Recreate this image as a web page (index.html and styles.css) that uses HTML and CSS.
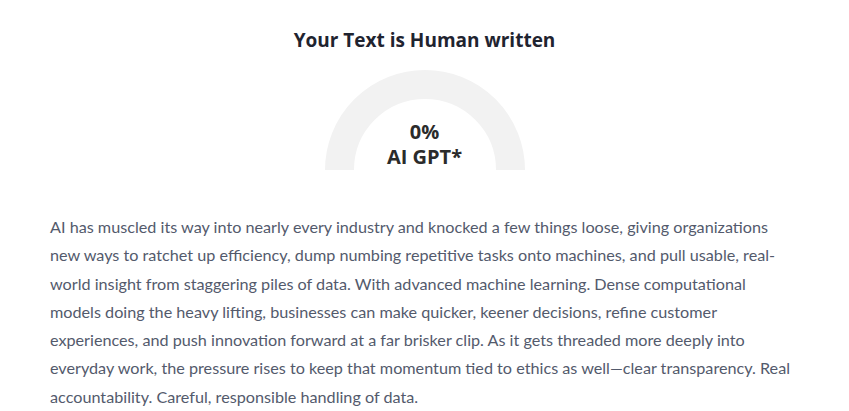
FILE: index.html
```html
<!DOCTYPE html>
<html lang="en">
<head>
  <meta charset="UTF-8" />
  <meta name="viewport" content="width=device-width, initial-scale=1.0"/>
  <title>AI Detector Result</title>
  <link rel="stylesheet" href="styles.css">
</head>
<body>

  <main class="result">
    <h2 class="result-title">Your Text is Human written</h2>

    <div class="gauge">
      <svg class="gauge-ring" width="200" height="100" viewBox="0 0 200 100">
        <path d="M 14.5 100 A 85.5 85.5 0 0 1 185.5 100" fill="none" stroke="#f2f2f2" stroke-width="29"/>
      </svg>
      <div class="gauge-label">
        <span>0%</span>
        <span>AI GPT*</span>
      </div>
    </div>

    <p class="result-text">AI has muscled its way into nearly every industry and knocked a few things loose, giving organizations new ways to ratchet up efficiency, dump numbing repetitive tasks onto machines, and pull usable, real-world insight from staggering piles of data. With advanced machine learning. Dense computational models doing the heavy lifting, businesses can make quicker, keener decisions, refine customer experiences, and push innovation forward at a far brisker clip. As it gets threaded more deeply into everyday work, the pressure rises to keep that momentum tied to ethics as well—clear transparency. Real accountability. Careful, responsible handling of data.</p>
  </main>

</body>
</html>
```

FILE: styles.css
```css
body {
  margin: 0;
  background: #fff;
  font-family: 'Open Sans', 'Noto Sans', sans-serif;
  color: #1f2937;
}

.result {
  display: flex;
  flex-direction: column;
  align-items: center;
  padding: 26px 50px 0;
}

.result-title {
  margin: 0;
  font-size: 19px;
  line-height: 28px;
  font-weight: 700;
  color: #1f2430;
}

.gauge {
  display: grid;
  margin-top: 16px;
  width: 200px;
  height: 100px;
}

.gauge-ring,
.gauge-label {
  grid-area: 1 / 1;
}

.gauge-label {
  align-self: end;
  display: flex;
  flex-direction: column;
  align-items: center;
  padding-bottom: 1px;
  font-size: 20px;
  line-height: 25px;
  font-weight: 700;
  color: #2b2b2b;
}

.result-text {
  margin: 43px 4px 0 0;
  font-family: Lato, 'Open Sans', sans-serif;
  font-size: 16.2px;
  line-height: 28.3px;
  color: #535a6c;
}
```
